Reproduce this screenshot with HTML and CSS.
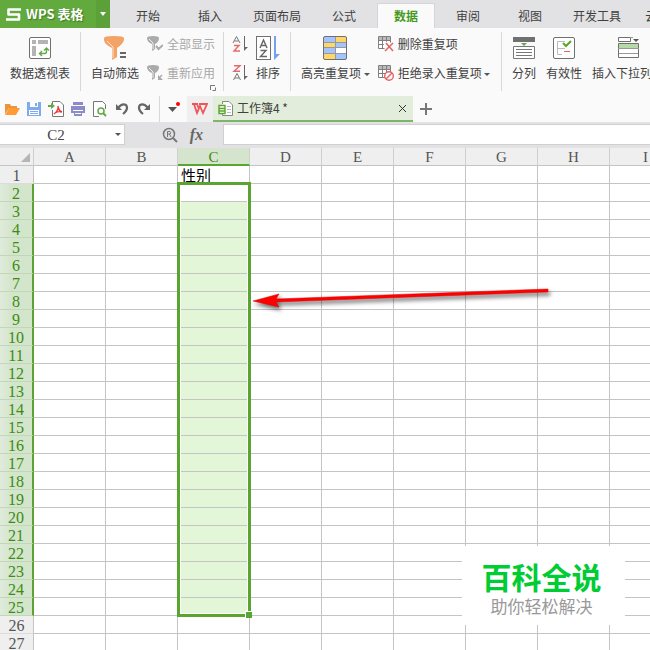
FILE: index.html
```html
<!DOCTYPE html>
<html lang="zh-CN">
<head>
<meta charset="utf-8">
<title>WPS 表格</title>
<link rel="stylesheet" href="styles.css">
</head>
<body>
<header class="top">
  <button class="brand">
    <svg width="15" height="13" viewBox="0 0 15 13"><path d="M15 1.500H2.500V6.500H13V11.500H0" fill="none" stroke="#fff" stroke-width="2.600" stroke-linejoin="round"/></svg>
    <span>WPS 表格</span>
  </button>
  <button class="brand-menu" aria-label="菜单"><svg width="6" height="4" viewBox="0 0 6 4"><path d="M0 0h6L3 4z" fill="#fff"/></svg></button>
  <nav class="tabs">
    <a href="#">开始</a><a href="#">插入</a><a href="#" class="wide">页面布局</a><a href="#">公式</a><a href="#" class="active">数据</a><a href="#">审阅</a><a href="#">视图</a><a href="#" class="wide">开发工具</a><a href="#" class="wide">云服务</a>
  </nav>
</header>

<section class="ribbon">
  <div class="group pivot">
    <button class="big">
      <svg width="24" height="24" viewBox="0 0 24 24"><rect x="1.500" y="1.500" width="21" height="21" rx="1.500" fill="#fff" stroke="#707070"/><path d="M4 4h4v4H4zM10 4h10v4H10zM4 10h4v10H4z" fill="#b4b4b4"/><path d="M12 17.500h4.500q2 0 2-2V12M14 15l-2.500 2.500L14 20M16 14.500l2.500-2.500 2.500 2.500" fill="none" stroke="#62a94a" stroke-width="1.400"/></svg>
      <span>数据透视表</span>
    </button>
  </div>
  <div class="group filter">
    <button class="big">
      <svg width="24" height="24" viewBox="0 0 24 24"><path d="M1 2q0-2 10-2t10 2v2q-1 4-7 8v9l-5 3V12Q1 8 1 4z" fill="#f2a365"/><path d="M4 5q3 3 6 6v11" fill="none" stroke="#fff" stroke-opacity=".7"/><path d="M17 16h6v2h-6zM17 20h6v2h-6z" fill="#666"/></svg>
      <span>自动筛选</span>
    </button>
    <div class="stack muted">
      <button class="small"><svg width="16" height="16" viewBox="0 0 16 16"><path d="M0 2q0-2 6-2t6 2q0 4-4 6v5l-3 2V8Q0 6 0 2z" fill="#ababab"/><path d="M2 3l4 4v6" fill="none" stroke="#eee"/><path d="M9 10l2.500 3L16 9" fill="none" stroke="#aaa" stroke-width="2"/></svg><span>全部显示</span></button>
      <button class="small"><svg width="16" height="16" viewBox="0 0 16 16"><path d="M0 2q0-2 6-2t6 2q0 4-4 6v5l-3 2V8Q0 6 0 2z" fill="#ababab"/><path d="M2 3l4 4v6" fill="none" stroke="#eee"/><path d="M15 10l-3 3" stroke="#aaa" stroke-width="1.500"/><path d="M11 10v5h5z" fill="#aaa"/></svg><span>重新应用</span></button>
    </div>
    <svg class="launcher" width="6" height="6" viewBox="0 0 6 6"><path d="M.5 5V.5H5M2.500 5.500h3v-3" fill="none" stroke="#777"/></svg>
  </div>
  <div class="group sort">
    <div class="stack">
      <button class="small" aria-label="升序"><svg width="16" height="16" viewBox="0 0 16 16"><path d="M1 7l3.500-6.500L8 7M2.500 5h4" fill="none" stroke="#777"/><path d="M2 9.500h5L2 15h6" fill="none" stroke="#e46a6a" stroke-width="1.400"/><path d="M12.500 0v14" stroke="#666"/><path d="M12 11h4l-4 4z" fill="#666"/></svg></button>
      <button class="small" aria-label="降序"><svg width="16" height="16" viewBox="0 0 16 16"><path d="M2 .7h6L2 6.300h6" fill="none" stroke="#e46a6a" stroke-width="1.400"/><path d="M1.500 15L5 8.500 8.500 15M3 13h4" fill="none" stroke="#777"/><path d="M12.500 0v14" stroke="#666"/><path d="M12 11h4l-4 4z" fill="#666"/></svg></button>
    </div>
    <button class="big">
      <svg width="24" height="24" viewBox="0 0 24 24"><rect x=".5" y=".5" width="14" height="23" fill="#fff" stroke="#707070"/><path d="M4 12l3.500-8L11 12M5.500 9.500h4M4.500 14.500H10l-5.500 6H11" fill="none" stroke="#666" stroke-width="1.400"/><path d="M18 0h2v18h4l-6 6z" fill="#74a0ee"/></svg>
      <span>排序</span>
    </button>
  </div>
  <div class="group dup">
    <button class="big">
      <svg width="24" height="24" viewBox="0 0 24 24"><rect x="1" y="1" width="22" height="22" rx="1" fill="#fff"/><path d="M1 1h11v5H1zM12 6h11v5H12zM1 12h11v5H1zM12 17h11v6H12z" fill="#a4c4ff"/><path d="M12 1h11v5H12zM1 6h11v5H1zM1 17h11v6H1z" fill="#ffd769"/><path d="M1 6.500h22M1 11.500h22M1 17.500h22M12.500 1v22" stroke="#999"/><rect x=".5" y=".5" width="23" height="23" rx="1.500" fill="none" stroke="#707070"/></svg>
      <span>高亮重复项 <i class="caret"></i></span>
    </button>
    <div class="stack">
      <button class="small"><svg width="16" height="16" viewBox="0 0 16 16"><path d="M.5.5h12v12H.5z" fill="#fff"/><path d="M0 1h13v3H0z" fill="#bbb"/><path d="M.5.500h12v12H.5zM0 4.500h13M0 8.500h9M4.500 1v12M8.500 1v8" fill="none" stroke="#808080"/><path d="M7 7l8 8M15 7l-8 8" stroke="#fafafa" stroke-width="4"/><path d="M8 7l7 8M15 7l-8 8" stroke="#e46464" stroke-width="1.500"/></svg><span>删除重复项</span></button>
      <button class="small"><svg width="16" height="16" viewBox="0 0 16 16"><path d="M.5.5h12v12H.5z" fill="#fff"/><path d="M0 1h13v3H0z" fill="#bbb"/><path d="M.5.500h12v12H.5zM0 4.500h13M0 8.500h9M4.500 1v12M8.500 1v8" fill="none" stroke="#808080"/><circle cx="11" cy="11" r="4.300" fill="#fff" stroke="#e46464" stroke-width="1.400"/><path d="M8 14l6-6" stroke="#e46464" stroke-width="1.400"/></svg><span>拒绝录入重复项 <i class="caret"></i></span></button>
    </div>
  </div>
  <div class="group tools">
    <button class="big">
      <svg width="24" height="24" viewBox="0 0 24 24"><path d="M1 1h22v5H1z" fill="#707070"/><path d="M9 7h6l-3 3z" fill="#62a94a"/><path d="M1.500 10.500h21v12h-21zM4 16.500h16M4 19.500h16M4 13.500h16" fill="#fff" stroke="#777"/></svg>
      <span>分列</span>
    </button>
    <button class="big">
      <svg width="24" height="24" viewBox="0 0 24 24"><rect x="1.500" y="1.500" width="21" height="21" rx="1.500" fill="#fff" stroke="#707070"/><path d="M13 5.500H5.500v13H10M5 12.500h8" fill="none" stroke="#bbb"/><path d="M11 7l3 3 5-5" fill="none" stroke="#5aa62a" stroke-width="2"/><path d="M12 15.500h6" stroke="#e46464"/></svg>
      <span>有效性</span>
    </button>
    <button class="big">
      <svg width="24" height="24" viewBox="0 0 24 24"><path d="M2.500 1.500h12v4h-12zM2.500 7.500h20v14h-20z" fill="#fff" stroke="#707070"/><path d="M3 8h19v4H3z" fill="#b7d9a6"/><path d="M2 12.500h21M3 17.500h19M14 1.500h3" stroke="#999"/><path d="M17 3h6l-3 3z" fill="#555"/></svg>
      <span>插入下拉列表</span>
    </button>
  </div>
</section>

<section class="docs">
  <div class="quick">
    <button aria-label="打开"><svg width="16" height="16" viewBox="0 0 16 16"><path d="M1 13V3h5l1 2h6v2H5z" fill="#e8953c"/><path d="M5 7h11l-4 7H1z" fill="#ff9a34"/></svg></button>
    <button aria-label="保存"><svg width="16" height="16" viewBox="0 0 16 16"><path d="M1 1h14v14H1z" fill="#80aaf0"/><path d="M4 1h8v5H4zM3 9h10v5H3z" fill="#fff"/><path d="M9 2h2v3H9zM4 10h8v1H4zM4 12h8v1H4z" fill="#80aaf0"/></svg></button>
    <button aria-label="输出为PDF"><svg width="16" height="16" viewBox="0 0 16 16"><path d="M4.500 4V.5H12L15.500 4v11.500h-11V9" fill="#fff" stroke="#777"/><path d="M0 4h3V2l4 3-4 3V6H0z" fill="#62a94a"/><path d="M10 5q1 4-4 8M10 6q1 4 4 5-4-1-7 1" fill="none" stroke="#e33" stroke-width="1.400"/></svg></button>
    <button aria-label="打印"><svg width="16" height="16" viewBox="0 0 16 16"><path d="M3 1h10v3H3zM1 5h14v7H1zM4 10h8v5H4z" fill="#8c8cc8"/><path d="M3 9.500h10M5 12.500h6" stroke="#fff"/></svg></button>
    <button aria-label="打印预览"><svg width="16" height="16" viewBox="0 0 16 16"><path d="M7 15.500H1.500V.5h9l3 3V8" fill="#fff" stroke="#777"/><circle cx="9" cy="10" r="3" fill="#fff" stroke="#62a94a" stroke-width="1.500"/><path d="M11 12l3 3" stroke="#62a94a" stroke-width="2"/></svg></button>
    <button aria-label="撤销"><svg width="16" height="16" viewBox="0 0 16 16"><path d="M4 7q4-5 8-3 3 4-3 9" fill="none" stroke="#666" stroke-width="2.200"/><path d="M2 3v6h6z" fill="#666"/></svg></button>
    <button aria-label="恢复"><svg width="16" height="16" viewBox="0 0 16 16"><path d="M12 7Q8 2 4 4q-3 4 3 9" fill="none" stroke="#666" stroke-width="2.200"/><path d="M14 3v6H8z" fill="#666"/></svg></button>
  </div>
  <button class="more" aria-label="更多"><svg width="16" height="16" viewBox="0 0 16 16"><path d="M1 6h9l-4.500 5z" fill="#555"/><circle cx="11" cy="3" r="2" fill="#f00"/></svg></button>
  <button class="home" aria-label="WPS"><svg width="16" height="12" viewBox="0 0 16 12"><path d="M0 1h6M2 1l3 9 3-7 3 7 4-9H7M5 1l2 5" fill="none" stroke="#ee5558" stroke-width="1.800"/></svg></button>
  <div class="doc">
    <svg width="15" height="15" viewBox="0 0 15 15"><path d="M4.500 3V.5H11L14.500 4v10.500h-10V12" fill="#fff" stroke="#888"/><path d="M9 5.500h4M9 8.500h4M9 11.500h4" stroke="#bbb"/><path d="M1 4.500h6v8H1zM1 7.500h6M1 10h6" fill="#fff" stroke="#5aa62a" stroke-width="1.400"/></svg>
    <span>工作簿4 *</span>
    <button aria-label="关闭"><svg width="9" height="9" viewBox="0 0 9 9"><path d="M1 1l7 7M8 1L1 8" stroke="#333"/></svg></button>
  </div>
  <button class="add" aria-label="新建"><svg width="12" height="12" viewBox="0 0 12 12"><path d="M0 6h12M6 0v12" stroke="#777" stroke-width="2"/></svg></button>
</section>

<section class="formula">
  <div class="name"><input aria-label="名称框" value="C2"><i class="caret"></i></div>
  <div class="fx">
    <svg width="16" height="16" viewBox="0 0 16 16"><circle cx="7" cy="7" r="5.500" fill="none" stroke="#777" stroke-width="1.500"/><path d="M11 11l4 4" stroke="#777" stroke-width="2"/><path d="M5.500 10V4.500H8q1.500 1.300 0 2.500H5.500M7.500 7L9 10" fill="none" stroke="#777"/></svg>
    <label for="formula">fx</label>
  </div>
  <input id="formula" class="entry">
</section>

<main class="sheet">
  <table>
    <thead><tr id="columns"><th class="corner"><svg width="9" height="9" viewBox="0 0 9 9"><path d="M9 0v9H0z" fill="#b5b5b5"/></svg></th></tr></thead>
    <tbody id="rows"></tbody>
  </table>
  <svg class="arrow" width="306" height="30" viewBox="0 0 306 30"><path d="M3 16l26-7-3 5L298 4v3L26 17l3 5z" fill="#f00" stroke="#d00" stroke-width=".5"/></svg>
</main>
<aside class="watermark"><strong>百科全说</strong><span>助你轻松解决</span></aside>
<script src="script.js"></script>
</body>
</html>
```
FILE: styles.css
```css
* { box-sizing: border-box; }
body {
  margin: 0;
  height: 100vh;
  display: flex;
  flex-direction: column;
  overflow: hidden;
  background: #fff;
  color: #404040;
  font: 12px/18px "Noto Sans CJK SC", sans-serif;
}
button {
  border: 0;
  padding: 0;
  background: none;
  color: inherit;
  font: inherit;
  white-space: nowrap;
}
svg { display: block; flex: none; }
a { color: inherit; text-decoration: none; }
input { border: 1px solid #d0d0d3; background: #fff; min-width: 0; }
.caret {
  display: inline-block;
  border: 3px solid transparent;
  border-top-color: #555;
  border-bottom: 0;
  vertical-align: middle;
}

.top { display: flex; height: 28px; flex: none; background: #e2e2e4; }
.brand, .brand-menu { display: flex; align-items: center; background: #62a93e; color: #fff; }
.brand { width: 96px; gap: 5px; padding-left: 6px; font-weight: bold; font-size: 13px; text-shadow: 1px 1px 1px #3d7b20; flex: none; }
.brand-menu { width: 14px; justify-content: center; background: #5ba038; flex: none; }
.tabs { display: flex; flex: 1; min-width: 0; overflow: hidden; padding-left: 7px; }
.tabs a { flex: none; padding: 7px 19px 0; line-height: 18px; }
.tabs .wide { padding-left: 12px; padding-right: 12px; }
.tabs .active {
  margin: 3px 2px 0;
  padding: 3px 16px 0;
  border: 1px solid #d5d5d7;
  border-bottom: 0;
  background: #fafafa;
  color: #479a1e;
  font-weight: bold;
}

.ribbon { display: flex; height: 68px; flex: none; padding-top: 4px; background: #fafafa; overflow: hidden; }
.group { position: relative; display: flex; flex: none; height: 59px; padding-top: 4px; border-right: 1px solid #d8d8d8; }
.big { display: flex; flex-direction: column; align-items: center; gap: 4px; height: 46px; }
.stack { display: flex; flex-direction: column; gap: 11px; }
.small { display: flex; align-items: center; gap: 4px; height: 16px; }
.muted { color: #a8a8a8; }
.pivot { width: 81px; padding-left: 10px; }
.filter { width: 143px; padding-left: 10px; gap: 8px; }
.sort { width: 67px; padding-left: 8px; gap: 8px; }
.dup { width: 211px; padding-left: 10px; gap: 8px; }
.stack { gap: 13px; }
.tools { padding-left: 10px; gap: 10px; border: 0; }
.launcher { position: absolute; right: 7px; bottom: 0; }

.docs { display: flex; height: 26px; flex: none; background: #fafafa; }
.quick { display: flex; align-items: center; gap: 6px; padding: 0 7px 0 4px; border-right: 1px solid #d8d8d8; }
.more { width: 27px; padding-left: 7px; }
.home { display: flex; align-items: center; justify-content: center; width: 26px; background: #efefef; }
.doc {
  display: flex;
  align-items: center;
  gap: 4px;
  width: 200px;
  padding: 0 6px 0 5px;
  background: #e2eedb;
  border-bottom: 2px solid #7fb56b;
}
.doc span { flex: 1; }
.add { padding: 0 7px; }

.formula { display: flex; height: 26px; flex: none; padding: 2px 0 3px; background: #e2e2e4; }
.name { position: relative; width: 125px; }
.name input { width: 100%; height: 21px; padding: 2px 12px 0 0; text-align: center; color: #444; font: 15px "Liberation Serif", serif; border-left: 0; }
.name .caret { position: absolute; right: 4px; top: 9px; }
.fx { display: flex; align-items: center; justify-content: flex-end; gap: 12px; width: 98px; padding-right: 20px; color: #666; }
.fx svg { width: 16px; }
.fx label { font: italic bold 16px/18px "Liberation Serif", serif; }
.entry { flex: 1; border-right: 0; }

.sheet { position: relative; flex: 1; min-height: 0; overflow: hidden; }
table { table-layout: fixed; border-collapse: separate; border-spacing: 0; width: 682px; }
th, td {
  width: 72px;
  height: 18px;
  padding: 0;
  border-right: 1px solid #c4c4c4;
  border-bottom: 1px solid #c4c4c4;
  line-height: 17px;
  white-space: nowrap;
}
th { padding-top: 2px; background: #efefef; color: #555; font: 15px/15px "Liberation Serif", serif; }
tbody th { font-size: 16px; border-bottom-color: #dcdcdc; }
thead th { border-right-color: #d0d0d0; }
.corner { width: 34px; }
.corner svg { margin-left: 21px; }
td { padding-left: 3px; color: #000; font-size: 15px; }
thead .on { background: #d5e5cd; color: #3d8b16; border-bottom: 2px solid #5aa532; line-height: 14px; }
tbody .on { background: linear-gradient(90deg, #e0ebdb, #d3e5cb 12px); color: #3d8b16; border-right: 2px solid #5aa532; border-bottom-color: #c2d6b8; }
.filled { background: #e3f6d8; }
.start { position: relative; }
.selection {
  position: absolute;
  left: -1px;
  top: -2px;
  width: 74px;
  height: 435px;
  border: 3px solid #5aa532;
  box-shadow: inset 0 0 0 1px #fff;
}
.selection::after {
  content: "";
  position: absolute;
  right: -4px;
  bottom: -4px;
  width: 6px;
  height: 6px;
  background: #5aa532;
  border-top: 1px solid #fff;
  border-left: 1px solid #fff;
}
.arrow { position: absolute; left: 250px; top: 137px; filter: drop-shadow(2px 3px 2px rgba(0, 0, 0, .6)); }

.watermark {
  position: fixed;
  right: 25px;
  bottom: 25px;
  display: flex;
  flex-direction: column;
  align-items: center;
  padding: 12px 22px 6px 18px;
  width: 163px;
  height: 79px;
  background: #fff;
  color: #999;
  white-space: nowrap;
}
.watermark strong { color: #0c3; font-size: 30px; line-height: 36px; font-weight: bold; }
.watermark span { font-size: 17px; line-height: 24px; }
```
FILE: script.js
```js
const letters = 'ABCDEFGHI'.split('');
const columns = document.getElementById('columns');
const rows = document.getElementById('rows');

function add(parent, tag, text, className) {
  const cell = document.createElement(tag);
  cell.textContent = text;
  if (className) cell.className = className;
  parent.append(cell);
  return cell;
}

letters.forEach(letter => add(columns, 'th', letter, letter === 'C' ? 'on' : ''));

for (let n = 1; n <= 28; n++) {
  const row = document.createElement('tr');
  add(row, 'th', n, n >= 2 && n <= 25 ? 'on' : '');
  letters.forEach(letter => {
    const isC = letter === 'C';
    const className = isC && n === 2 ? 'start' : isC && n > 2 && n <= 25 ? 'filled' : '';
    const cell = add(row, 'td', isC && n === 1 ? '性别' : '', className);
    if (className === 'start') add(cell, 'div', '', 'selection');
  });
  rows.append(row);
}
```
